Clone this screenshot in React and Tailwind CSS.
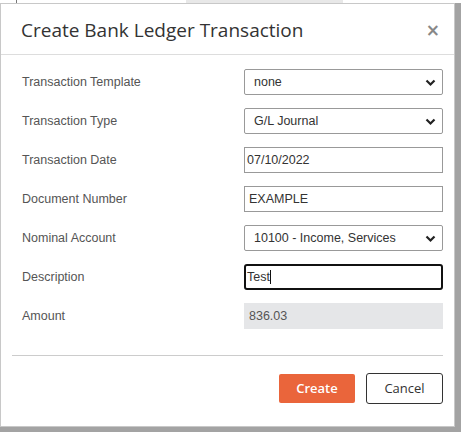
import React from "react";

const Chevron = () => (
  <svg width="11" height="8" viewBox="0 0 11 8" className="absolute right-[6px] top-[9px]">
    <path d="M1.5 1.5 L5.5 5.5 L9.5 1.5" fill="none" stroke="#222" strokeWidth="2.2" />
  </svg>
);

function Field({ label, children }) {
  return (
    <div className="flex items-center h-[26px]">
      <div className="w-[222px] text-[12.5px] text-[#555]">{label}</div>
      <div className="w-[199px]">{children}</div>
    </div>
  );
}

function SelectBox({ value }) {
  return (
    <div className="relative h-[26px] border border-[#999] rounded-[2px] bg-white pl-[9px] flex items-center text-[12.5px] text-[#333]">
      {value}
      <Chevron />
    </div>
  );
}

function TextBox({ value, pad = "pl-[4px]" }) {
  return (
    <div className={`h-[26px] border border-[#999] bg-white ${pad} flex items-center text-[12.5px] text-[#333]`}>
      {value}
    </div>
  );
}

export default function App() {
  return (
    <div className="w-[461px] h-[432px] bg-[#a3a3a3] overflow-hidden relative" style={{ fontFamily: "'Liberation Sans', Arial, sans-serif" }}>
      {/* page behind */}
      <div className="h-[3px] bg-white relative">
        <div className="absolute left-[16px] top-0 w-[1px] h-[3px] bg-[#777]" />
        <div className="absolute left-[186px] top-0 w-[157px] h-[3px] bg-[#e8e8e8]" />
      </div>

      <div className="w-[455px] h-[424px] bg-white border border-[#c8c8c8] flex flex-col">
        <div className="h-[51px] border-b border-[#ddd] flex items-center justify-between pl-[20px] pr-[14px]">
          <h4 className="text-[19px] text-[#333] pt-[3px]" style={{ fontFamily: "'Open Sans', 'Noto Sans', sans-serif" }}>
            Create Bank Ledger Transaction
          </h4>
          <span className="text-[17px] font-bold text-[#888] leading-none pt-[2px]" style={{ fontFamily: "'DejaVu Sans', sans-serif" }}>×</span>
        </div>

        <div className="pl-[21px] pt-[14px] flex flex-col gap-[13px]">
          <Field label="Transaction Template"><SelectBox value="none" /></Field>
          <Field label="Transaction Type"><SelectBox value="G/L Journal" /></Field>
          <Field label="Transaction Date"><TextBox value="07/10/2022" pad="pl-[2px]" /></Field>
          <Field label="Document Number"><TextBox value="EXAMPLE" /></Field>
          <Field label="Nominal Account"><SelectBox value="10100 - Income, Services" /></Field>
          <Field label="Description">
            <div className="h-[26px] border-2 border-[#111] rounded-[3px] bg-white pl-[1px] flex items-center text-[12.5px] text-[#333]">
              Test<span className="inline-block w-[1px] h-[14px] bg-[#111]" />
            </div>
          </Field>
          <Field label="Amount">
            <div className="h-[26px] bg-[#e5e6e8] pl-[5px] flex items-center text-[12.5px] text-[#555]">836.03</div>
          </Field>
        </div>

        <div className="mx-[11px] mt-[26px] border-t border-[#ccc]" />

        <div className="flex justify-end gap-[11px] pr-[11px] pt-[17px]" style={{ fontFamily: "'Open Sans', 'Noto Sans', sans-serif" }}>
          <button className="w-[76px] h-[29px] bg-[#ea653b] text-white text-[13px] font-semibold rounded-[2px] mt-[1px]">Create</button>
          <button className="w-[77px] h-[31px] bg-white border border-[#333] text-[#333] text-[13px] rounded-[3px]">Cancel</button>
        </div>
      </div>
    </div>
  );
}
